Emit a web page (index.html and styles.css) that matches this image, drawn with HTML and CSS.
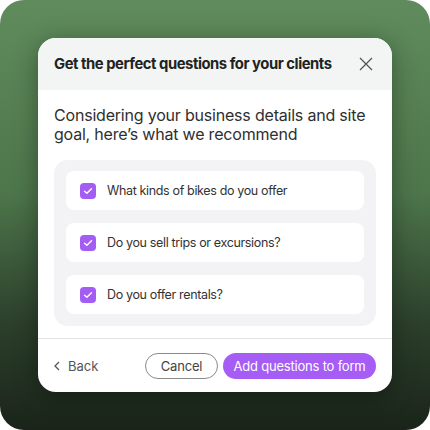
FILE: index.html
```html
<!DOCTYPE html>
<html lang="en">
<head>
  <meta charset="UTF-8" />
  <title>Recommended questions</title>
  <meta name="viewport" content="width=device-width, initial-scale=1.0" />
  <link rel="stylesheet" href="styles.css">
</head>
<body>
  <div class="frame">
    <!-- Dialog -->
    <div class="modal">
      <div class="modal-header">
        <div class="modal-title">Get the perfect questions for your clients</div>
        <button class="close-btn" aria-label="Close">
          <svg width="14" height="14" viewBox="0 0 14 14"><path d="M1 1L13 13M13 1L1 13" stroke="#555" stroke-width="1.3" fill="none"/></svg>
        </button>
      </div>
      <div class="modal-body">
        <p class="intro">Considering your business details and site goal, here’s what we recommend</p>
        <div class="question-list">
          <label class="question">
            <span class="check"><svg width="10" height="8" viewBox="0 0 10 8"><path d="M1.5 4.2L3.9 6.3L8.5 1.8" stroke="#fff" stroke-width="1.4" fill="none" stroke-linecap="round" stroke-linejoin="round"/></svg></span>
            What kinds of bikes do you offer
          </label>
          <label class="question">
            <span class="check"><svg width="10" height="8" viewBox="0 0 10 8"><path d="M1.5 4.2L3.9 6.3L8.5 1.8" stroke="#fff" stroke-width="1.4" fill="none" stroke-linecap="round" stroke-linejoin="round"/></svg></span>
            Do you sell trips or excursions?
          </label>
          <label class="question">
            <span class="check"><svg width="10" height="8" viewBox="0 0 10 8"><path d="M1.5 4.2L3.9 6.3L8.5 1.8" stroke="#fff" stroke-width="1.4" fill="none" stroke-linecap="round" stroke-linejoin="round"/></svg></span>
            Do you offer rentals?
          </label>
        </div>
      </div>
      <div class="modal-footer">
        <button class="back-btn">
          <svg width="6" height="10" viewBox="0 0 6 10"><path d="M5 1L1 5L5 9" stroke="#555" stroke-width="1.3" fill="none"/></svg>
          Back
        </button>
        <div class="actions">
          <button class="btn btn-outline">Cancel</button>
          <button class="btn btn-primary">Add questions to form</button>
        </div>
      </div>
    </div>
  </div>
</body>
</html>
```

FILE: styles.css
```css
html, body {
  margin: 0;
  padding: 0;
  background: #fff;
  font-family: Inter, "Noto Sans", sans-serif;
  color: #2b2b2b;
}
/* Green rounded backdrop */
.frame {
  width: 430px;
  height: 430px;
  box-sizing: border-box;
  padding: 38px;
  border-radius: 24px;
  background: linear-gradient(to bottom, #608c5d 0%, #4d764b 45%, #2c402b 75%, #1a241a 100%);
  overflow: hidden;
}
.modal {
  width: 354px;
  height: 354px;
  background: #fff;
  border-radius: 18px;
  overflow: hidden;
  display: flex;
  flex-direction: column;
  box-shadow: 0 4px 24px rgba(0, 0, 0, 0.35);
}
.modal-header {
  height: 52px;
  flex-shrink: 0;
  background: #f3f5f4;
  display: flex;
  align-items: center;
  justify-content: space-between;
  padding: 0 16px;
}
.modal-title {
  font-size: 14.8px;
  font-weight: 700;
  letter-spacing: -0.45px;
  color: #222;
}
.close-btn {
  border: none;
  background: none;
  padding: 0;
  margin-right: 3px;
  display: flex;
  cursor: pointer;
}
.modal-body {
  padding: 16px 16px 12px;
  border-bottom: 1px solid #e2e2e2;
}
.intro {
  margin: 0 0 16px;
  font-size: 16px;
  line-height: 19px;
  letter-spacing: -0.2px;
  color: #2f2f2f;
}
.question-list {
  background: #f3f3f5;
  border-radius: 14px;
  padding: 11px 12px 12px;
  display: flex;
  flex-direction: column;
  gap: 13px;
}
.question {
  height: 39px;
  background: #fff;
  border-radius: 8px;
  display: flex;
  align-items: center;
  gap: 11px;
  padding-left: 14px;
  font-size: 12.5px;
  letter-spacing: -0.35px;
  color: #333;
}
.check {
  width: 16px;
  height: 16px;
  border-radius: 4px;
  background: #a35cf4;
  display: flex;
  align-items: center;
  justify-content: center;
}
.modal-footer {
  flex: 1;
  display: flex;
  align-items: center;
  justify-content: space-between;
  padding: 0 16px;
}
.back-btn {
  border: none;
  background: none;
  padding: 0;
  display: flex;
  align-items: center;
  gap: 8px;
  font-family: inherit;
  font-size: 13px;
  color: #555;
}
.actions {
  display: flex;
  gap: 5px;
}
.btn {
  height: 26px;
  border-radius: 13px;
  font-family: inherit;
  font-size: 13px;
  letter-spacing: -0.2px;
  padding: 0;
  white-space: nowrap;
  cursor: pointer;
}
.btn-outline {
  background: #fff;
  border: 1px solid #8a8a8a;
  color: #444;
  width: 73px;
}
.btn-primary {
  background: #a55df5;
  border: none;
  color: #fff;
  width: 153px;
}
```
